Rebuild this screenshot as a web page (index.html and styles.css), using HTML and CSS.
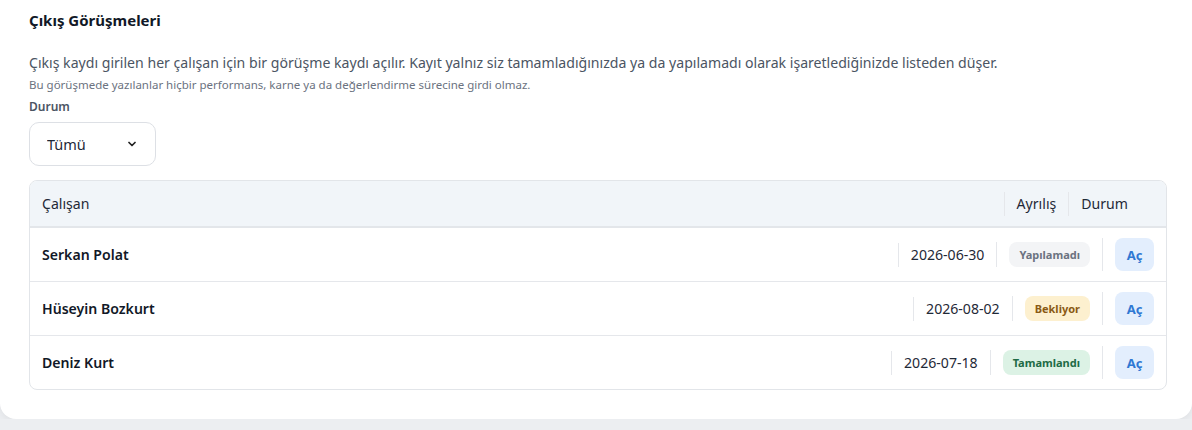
FILE: index.html
```html
<!DOCTYPE html>
<html lang="tr">
<head>
    <meta charset="UTF-8">
    <meta name="viewport" content="width=device-width, initial-scale=1.0">
    <title>Çıkış Görüşmeleri</title>
    <link rel="stylesheet" href="styles.css">
</head>
<body>
    <div class="panel">
        <h2 class="title">Çıkış Görüşmeleri</h2>
        <p class="desc">Çıkış kaydı girilen her çalışan için bir görüşme kaydı açılır. Kayıt yalnız siz tamamladığınızda ya da yapılamadı olarak işaretlediğinizde listeden düşer.</p>
        <p class="note">Bu görüşmede yazılanlar hiçbir performans, karne ya da değerlendirme sürecine girdi olmaz.</p>

        <label class="field-label" for="status">Durum</label>
        <div class="select-wrap">
            <select id="status" class="status-select">
                <option>Tümü</option>
                <option>Bekliyor</option>
                <option>Tamamlandı</option>
                <option>Yapılamadı</option>
            </select>
            <svg class="chevron" width="8" height="6" viewBox="0 0 8 6">
                <path d="M1 1.5 L4 4.5 L7 1.5" fill="none" stroke="#222" stroke-width="1.7" stroke-linecap="round" stroke-linejoin="round"/>
            </svg>
        </div>

        <div class="list">
            <div class="list-head">
                <div class="cell name">Çalışan</div>
                <div class="cell">Ayrılış</div>
                <div class="cell">Durum</div>
            </div>
            <div class="list-row">
                <div class="cell name">Serkan Polat</div>
                <div class="cell">2026-06-30</div>
                <div class="cell"><span class="badge gray">Yapılamadı</span></div>
                <div class="cell"><button class="open-btn">Aç</button></div>
            </div>
            <div class="list-row">
                <div class="cell name">Hüseyin Bozkurt</div>
                <div class="cell">2026-08-02</div>
                <div class="cell"><span class="badge yellow">Bekliyor</span></div>
                <div class="cell"><button class="open-btn">Aç</button></div>
            </div>
            <div class="list-row">
                <div class="cell name">Deniz Kurt</div>
                <div class="cell">2026-07-18</div>
                <div class="cell"><span class="badge green">Tamamlandı</span></div>
                <div class="cell"><button class="open-btn">Aç</button></div>
            </div>
        </div>
    </div>
</body>
</html>
```

FILE: styles.css
```css
body{
    margin: 0;
    background-color: #eceef1;
    font-family: "Noto Sans", "Open Sans", sans-serif;
    color: #1f2937;
}
.panel{
    background-color: #fff;
    border-radius: 0 0 16px 16px;
    box-shadow: 0 2px 8px rgba(0,0,0,0.06);
    padding: 8px 25px 29px 29px;
}
.title{
    margin: 0;
    font-size: 15px;
    line-height: 25px;
    font-weight: 700;
    color: #111827;
}
.desc{
    margin: 19px 0 0;
    font-size: 14.1px;
    line-height: 22px;
    color: #4b5563;
}
.note{
    margin: 3px 0 0;
    font-size: 11.5px;
    line-height: 16px;
    color: #6b7280;
}
.field-label{
    display: block;
    margin-top: 6px;
    font-size: 12px;
    line-height: 16px;
    font-weight: 600;
    color: #4b5563;
}
.select-wrap{
    position: relative;
    width: 127px;
    margin-top: 7px;
}
.status-select{
    appearance: none;
    width: 100%;
    height: 44px;
    padding: 0 0 0 17px;
    border: 1px solid #dde0e5;
    border-radius: 10px;
    background-color: #fff;
    font-family: inherit;
    font-size: 14.5px;
    color: #1f2937;
}
.chevron{
    position: absolute;
    right: 20px;
    top: 19px;
    pointer-events: none;
}
.list{
    margin-top: 14px;
    border: 1px solid #e2e5e9;
    border-radius: 8px;
    overflow: hidden;
}
.list-head, .list-row{
    display: flex;
    align-items: center;
}
.list-head{
    height: 45px;
    padding-right: 26px;
    background-color: #f1f5f9;
    border-bottom: 2px solid #e3e6ea;
    font-size: 14.1px;
}
.list-row{
    height: 53px;
    border-bottom: 1px solid #e5e7eb;
    font-size: 14.1px;
}
.list-row:last-child{
    border-bottom: 0;
}
.cell{
    padding: 0 12px;
    line-height: 24px;
    border-left: 1px solid #e5e7eb;
}
.cell.name{
    flex: 1;
    border-left: 0;
}
.list-row .cell.name{
    font-weight: 600;
    color: #111827;
}
.badge{
    display: inline-block;
    padding: 0 10px;
    line-height: 25px;
    border-radius: 8px;
    font-size: 11px;
    font-weight: 700;
    vertical-align: middle;
}
.badge.gray{
    background-color: #f3f4f6;
    color: #6b7280;
}
.badge.yellow{
    background-color: #fdf0cf;
    color: #8a5a14;
}
.badge.green{
    background-color: #dcf2e5;
    color: #1e6b45;
}
.open-btn{
    display: block;
    width: 39px;
    height: 33px;
    padding: 0;
    border: 0;
    border-radius: 8px;
    background-color: #e3eefd;
    color: #2f78d3;
    font-family: inherit;
    font-size: 13px;
    font-weight: 700;
    cursor: pointer;
}
```
